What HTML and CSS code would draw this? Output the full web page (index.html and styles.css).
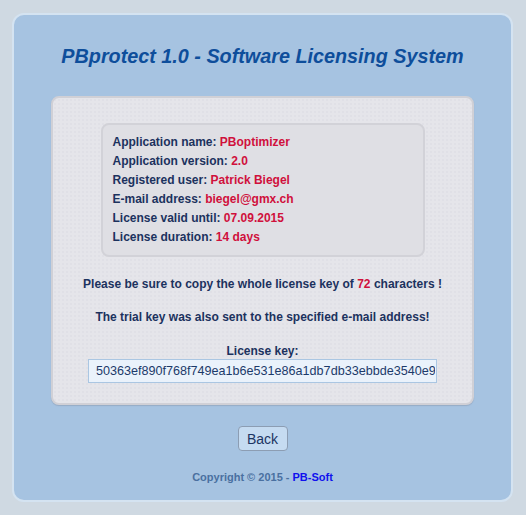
FILE: index.html
```html
<!DOCTYPE html>
<html>
<head>
<meta charset="utf-8">
<link rel="stylesheet" href="styles.css">
</head>
<body>
<div class="panel">
  <h1 class="title">PBprotect 1.0 - Software Licensing System</h1>
  <div class="card">
    <div class="info">
      <div class="row">Application name: <span class="val">PBoptimizer</span></div>
      <div class="row">Application version: <span class="val">2.0</span></div>
      <div class="row">Registered user: <span class="val">Patrick Biegel</span></div>
      <div class="row">E-mail address: <span class="val">biegel@gmx.ch</span></div>
      <div class="row">License valid until: <span class="val">07.09.2015</span></div>
      <div class="row">License duration: <span class="val">14 days</span></div>
    </div>
    <p class="note first">Please be sure to copy the whole license key of <span class="val">72</span> characters !</p>
    <p class="note second">The trial key was also sent to the specified e-mail address!</p>
    <p class="note keylabel">License key:</p>
    <input class="key" type="text" value="50363ef890f768f749ea1b6e531e86a1db7db33ebbde3540e9f1c2a7d4b8e6f0a3c5d7e9" readonly>
  </div>
  <div class="actions"><button class="back">Back</button></div>
  <div class="copyright">Copyright © 2015 - <span class="brand">PB-Soft</span></div>
</div>
</body>
</html>
```

FILE: styles.css
```css
html, body {
  margin: 0;
  padding: 0;
  background: #cfd9e2;
  font-family: "Liberation Sans", Arial, sans-serif;
}
.panel {
  margin: 13px 13px 0 12px;
  height: 489px;
  box-sizing: border-box;
  border: 2px solid #d4e3f1;
  border-radius: 12px;
  background: #a6c3e1;
  padding: 0 37px;
}
.title {
  margin: 29px 0 28px;
  font-size: 19.8px;
  line-height: 24px;
  font-weight: bold;
  font-style: italic;
  text-align: center;
  color: #0e4e9b;
}
.card {
  border: 2px solid #d0d0d6;
  border-radius: 8px;
  background-color: #e5e5ea;
  background-image: radial-gradient(circle, rgba(205,205,215,0.35) 0.6px, transparent 0.9px);
  background-size: 4px 4px;
  padding: 25px 0 20px;
  box-shadow: 0 1px 1px rgba(120,130,150,0.35);
}
.info {
  width: 324px;
  box-sizing: border-box;
  margin: 0 auto;
  padding: 8px 10px 8px;
  border: 2px solid #d2d2d8;
  border-radius: 8px;
  background: #dfdfe4;
}
.row {
  font-size: 12px;
  line-height: 19px;
  font-weight: bold;
  color: #1c325e;
}
.val {
  color: #d0103c;
}
.note {
  margin: 0;
  font-size: 12px;
  line-height: 15px;
  font-weight: bold;
  color: #1c325e;
  text-align: center;
}
.first { margin-top: 20px; }
.second { margin-top: 18px; }
.keylabel { margin-top: 19px; }
.key {
  display: block;
  width: 349px;
  height: 24px;
  box-sizing: border-box;
  margin: 0 auto;
  padding: 0 1px 0 7px;
  border: 1px solid #aac6e2;
  background: #eaf2fb;
  font-family: "Liberation Sans", Arial, sans-serif;
  font-size: 12.6px;
  color: #1c3a6a;
  outline: none;
}
.actions {
  display: flex;
  justify-content: center;
  margin-top: 21px;
}
.back {
  width: 50px;
  height: 25px;
  box-sizing: border-box;
  padding: 0;
  border: 1px solid #8c9db3;
  border-radius: 4px;
  background: #c5dbf1;
  font-family: "Liberation Sans", Arial, sans-serif;
  font-size: 14px;
  color: #1c3563;
}
.copyright {
  margin-top: 20px;
  text-align: center;
  font-size: 11px;
  line-height: 13px;
  font-weight: bold;
  color: #4a70a0;
}
.brand {
  color: #1010ee;
}
```
